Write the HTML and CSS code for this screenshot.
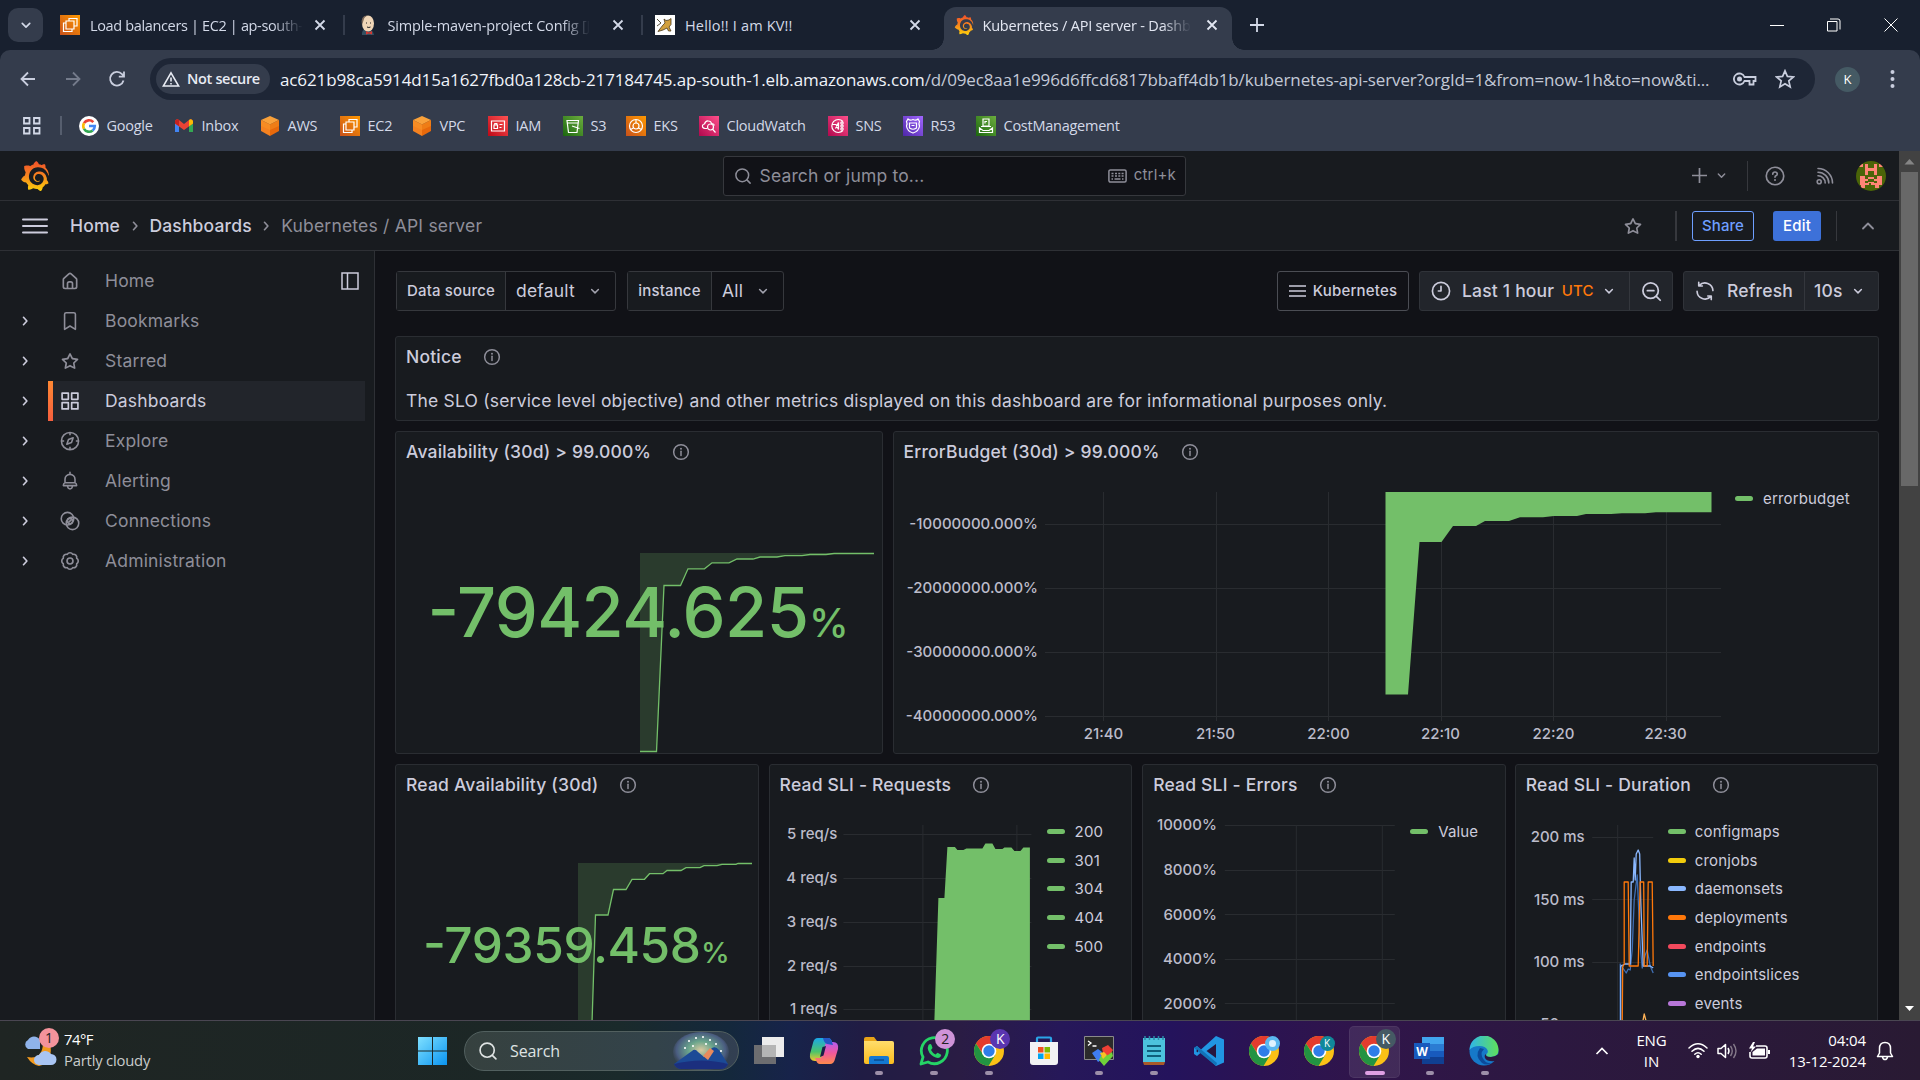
FILE: index.html
```html
<!DOCTYPE html>
<html lang="en">
<head>
<meta charset="utf-8">
<title>Kubernetes / API server - Dashboards - Grafana</title>
<link rel="stylesheet" href="styles.css">
</head>
<body>
<svg class="defs" width="0" height="0">
  <defs>
    <linearGradient id="gGraf" x1="0" y1="0" x2="0" y2="1"><stop offset="0" stop-color="#f0502a"/><stop offset=".45" stop-color="#f57f20"/><stop offset="1" stop-color="#fdd20a"/></linearGradient>
    <linearGradient id="gOrange" x1="0" y1="1" x2="1" y2="0"><stop offset="0" stop-color="#c8511b"/><stop offset="1" stop-color="#ff9900"/></linearGradient>
    <linearGradient id="gRed" x1="0" y1="1" x2="1" y2="0"><stop offset="0" stop-color="#bd0816"/><stop offset="1" stop-color="#ff5252"/></linearGradient>
    <linearGradient id="gGreen" x1="0" y1="1" x2="1" y2="0"><stop offset="0" stop-color="#1b660f"/><stop offset="1" stop-color="#6cae3e"/></linearGradient>
    <linearGradient id="gPink" x1="0" y1="1" x2="1" y2="0"><stop offset="0" stop-color="#b0084d"/><stop offset="1" stop-color="#ff4f8b"/></linearGradient>
    <linearGradient id="gPurple" x1="0" y1="1" x2="1" y2="0"><stop offset="0" stop-color="#4d27a8"/><stop offset="1" stop-color="#a166ff"/></linearGradient>
    <linearGradient id="gWin" x1="0" y1="0" x2="1" y2="1"><stop offset="0" stop-color="#7fe0ff"/><stop offset="1" stop-color="#0a94f0"/></linearGradient>
    <linearGradient id="gEdge" x1="0" y1="0" x2="1" y2="0"><stop offset="0" stop-color="#2fb6ea"/><stop offset="1" stop-color="#5fe05a"/></linearGradient>
    <linearGradient id="gCop1" x1="0" y1="0" x2="0" y2="1"><stop offset="0" stop-color="#1aa7e8"/><stop offset=".6" stop-color="#4cc46a"/><stop offset="1" stop-color="#f5c72c"/></linearGradient>
    <linearGradient id="gCop2" x1="0" y1="0" x2="0" y2="1"><stop offset="0" stop-color="#b35cf0"/><stop offset=".5" stop-color="#f0589c"/><stop offset="1" stop-color="#ff8a4c"/></linearGradient>
    <linearGradient id="gFold" x1="0" y1="0" x2="0" y2="1"><stop offset="0" stop-color="#ffdd6b"/><stop offset="1" stop-color="#fbbc1e"/></linearGradient>
    <radialGradient id="gSky" cx=".5" cy=".45" r=".55"><stop offset="0" stop-color="#d9c9a0"/><stop offset=".4" stop-color="#6aa58c"/><stop offset=".8" stop-color="#4a5c80"/><stop offset="1" stop-color="#3f4a5e" stop-opacity="0"/></radialGradient>
    <symbol id="grafana" viewBox="0 0 24 24"><path fill="url(#gGraf)" d="M23.02 10.59a8.578 8.578 0 0 0-.862-3.034 8.911 8.911 0 0 0-1.789-2.445c.337-1.342-.413-2.505-.413-2.505-1.292-.08-2.113.4-2.416.62-.052-.02-.102-.044-.154-.064-.22-.089-.446-.172-.677-.247-.231-.073-.47-.14-.711-.197a9.867 9.867 0 0 0-.875-.161C14.557.753 12.94 0 12.94 0c-1.804 1.145-2.147 2.744-2.147 2.744l-.018.093c-.098.029-.2.057-.298.088-.138.042-.275.094-.413.143-.138.055-.275.107-.41.166a8.869 8.869 0 0 0-1.557.87l-.063-.029c-2.497-.955-4.716.195-4.716.195-.203 2.658.996 4.33 1.235 4.636a11.608 11.608 0 0 0-.607 2.635C1.636 12.677.953 15.014.953 15.014c1.926 2.214 4.171 2.351 4.171 2.351.003-.002.006-.002.006-.005.285.509.615.994.986 1.446.156.19.32.371.488.548-.704 2.009.099 3.68.099 3.68 2.144.08 3.553-.937 3.849-1.173a9.784 9.784 0 0 0 3.164.501h.08l.055-.003.107-.002.103-.005.003.002c1.01 1.44 2.788 1.646 2.788 1.646 1.264-1.332 1.337-2.653 1.337-2.94v-.058c0-.02-.003-.039-.003-.06.265-.187.52-.387.758-.6a7.875 7.875 0 0 0 1.415-1.7c1.43.083 2.437-.885 2.437-.885-.236-1.49-1.085-2.216-1.264-2.354l-.018-.013-.016-.013a.217.217 0 0 1-.031-.02c.008-.092.016-.18.02-.27.011-.162.016-.323.016-.48v-.253l-.005-.098-.008-.135a1.891 1.891 0 0 0-.01-.13c-.003-.042-.008-.083-.013-.125l-.016-.124-.018-.122a6.215 6.215 0 0 0-2.032-3.73 6.015 6.015 0 0 0-3.222-1.46 6.292 6.292 0 0 0-.85-.048l-.107.002h-.063l-.044.003-.104.008a4.777 4.777 0 0 0-3.335 1.695c-.332.4-.592.84-.768 1.297a4.594 4.594 0 0 0-.312 1.817l.003.091c.005.055.007.11.013.164a3.615 3.615 0 0 0 .698 1.82 3.53 3.53 0 0 0 1.827 1.282c.33.098.66.14.971.137.039 0 .078 0 .114-.002l.063-.003c.02 0 .041-.003.062-.003.034-.002.065-.007.099-.01.007 0 .018-.003.028-.003l.031-.005.06-.008a1.18 1.18 0 0 0 .112-.02c.036-.008.072-.013.109-.024a2.634 2.634 0 0 0 .914-.415c.028-.02.056-.041.085-.065a.248.248 0 0 0 .039-.35.244.244 0 0 0-.309-.06l-.078.042c-.09.044-.184.083-.283.116a2.476 2.476 0 0 1-.475.096c-.028.003-.054.006-.083.006l-.083.002c-.026 0-.054 0-.08-.002l-.102-.006h-.012l-.024.006c-.016-.003-.031-.003-.044-.006-.031-.002-.06-.007-.091-.01a2.59 2.59 0 0 1-.724-.213 2.557 2.557 0 0 1-.667-.438 2.52 2.52 0 0 1-.805-1.475 2.306 2.306 0 0 1-.029-.444l.006-.122v-.023l.002-.031c.003-.021.003-.04.005-.06a3.163 3.163 0 0 1 1.352-2.29 3.12 3.12 0 0 1 .937-.43 2.946 2.946 0 0 1 .776-.101h.06l.07.002.045.003h.026l.07.005a4.041 4.041 0 0 1 1.635.49 3.94 3.94 0 0 1 1.602 1.662 3.77 3.77 0 0 1 .397 1.414l.005.076.003.075c.002.026.002.05.002.075 0 .024.003.052 0 .07v.065l-.002.073-.008.174a6.195 6.195 0 0 1-.08.639 5.1 5.1 0 0 1-.267.927 5.31 5.31 0 0 1-.624 1.13 5.052 5.052 0 0 1-3.237 2.014 4.82 4.82 0 0 1-.649.066l-.039.003h-.287a6.607 6.607 0 0 1-1.716-.265 6.776 6.776 0 0 1-3.4-2.274 6.75 6.75 0 0 1-.746-1.15 6.616 6.616 0 0 1-.714-2.596l-.005-.083-.002-.02v-.056l-.003-.073v-.096l-.003-.104v-.07l.003-.163c.008-.22.026-.45.054-.678a8.707 8.707 0 0 1 .28-1.355c.128-.444.286-.872.473-1.277a7.04 7.04 0 0 1 1.456-2.1 5.925 5.925 0 0 1 .953-.763c.169-.111.343-.213.524-.306.089-.05.182-.091.273-.135.047-.02.093-.042.138-.062a7.177 7.177 0 0 1 .714-.267l.145-.045c.049-.015.098-.026.148-.041.098-.029.197-.052.296-.076.049-.013.1-.02.15-.033l.15-.032.151-.028.076-.013.075-.01.153-.024c.057-.01.114-.013.171-.023l.169-.021c.036-.003.073-.008.106-.01l.073-.008.036-.003.042-.002c.057-.003.114-.008.171-.01l.086-.006h.023l.037-.003.145-.007a7.999 7.999 0 0 1 1.708.125 7.917 7.917 0 0 1 2.048.68 8.253 8.253 0 0 1 1.672 1.09l.09.077.089.078c.06.052.114.107.171.159.057.052.112.106.166.16.052.055.107.107.159.164a8.671 8.671 0 0 1 1.41 1.978c.012.026.028.052.04.078l.04.078.075.156c.023.051.05.1.07.153l.065.15a8.848 8.848 0 0 1 .45 1.34.19.19 0 0 0 .201.142.186.186 0 0 0 .172-.184c.01-.246.002-.532-.024-.856z"/></symbol>
    <symbol id="x" viewBox="0 0 12 12"><path d="M1.500 1.500l9 9M10.500 1.500l-9 9" fill="none" stroke="currentColor" stroke-width="1.800"/></symbol>
    <symbol id="down" viewBox="0 0 24 24"><path d="M7.500 10l4.500 4.500L16.500 10" fill="none" stroke="currentColor" stroke-width="2" stroke-linecap="round" stroke-linejoin="round"/></symbol>
    <symbol id="right" viewBox="0 0 24 24"><path d="M10 7l4.500 5L10 17" fill="none" stroke="currentColor" stroke-width="2.200" stroke-linecap="round" stroke-linejoin="round"/></symbol>
    <symbol id="star" viewBox="0 0 24 24"><path fill="currentColor" d="M22,9.67A1,1,0,0,0,21.14,9l-5.69-.83L12.9,3a1,1,0,0,0-1.8,0L8.55,8.16,2.86,9a1,1,0,0,0-.81.68,1,1,0,0,0,.25,1l4.13,4-1,5.68A1,1,0,0,0,6.9,21.44L12,18.77l5.1,2.67a.93.93,0,0,0,.46.12,1,1,0,0,0,.59-.19,1,1,0,0,0,.4-1l-1-5.68,4.13-4A1,1,0,0,0,22,9.67Zm-6.15,4a1,1,0,0,0-.29.88l.72,4.2-3.76-2a1.06,1.06,0,0,0-.94,0l-3.76,2,.72-4.2a1,1,0,0,0-.29-.88l-3-3,4.21-.61a1,1,0,0,0,.76-.55L12,5.7l1.88,3.82a1,1,0,0,0,.76.55l4.21.61Z"/></symbol>
    <symbol id="info" viewBox="0 0 24 24"><g fill="none" stroke="currentColor" stroke-width="2"><circle cx="12" cy="12" r="9.800"/><path d="M12 11v5.500" stroke-linecap="round"/></g><circle cx="12" cy="7.700" r="1.300" fill="currentColor"/></symbol>
    <symbol id="glass" viewBox="0 0 24 24"><g fill="none" stroke="currentColor" stroke-width="2" stroke-linecap="round"><circle cx="11" cy="11" r="8.500"/><path d="M17.200 17.200L21.500 21.500"/></g></symbol>
    <symbol id="ec2" viewBox="0 0 20 20"><path fill="url(#gOrange)" d="M0 0h20v20H0z"/><g fill="none" stroke="#fff" stroke-width="1.200"><path d="M6 8H3.500v8.500H12V14"/><path d="M6 6h8v8H6z"/><path d="M9 6V3.500h8V11h-3"/></g></symbol>
    <symbol id="cube" viewBox="0 0 20 20"><path fill="#f9a13a" d="M10 0l9 4-9 4.500L1 4z"/><path fill="#f58220" d="M1 4l9 4.500V20l-9-5z"/><path fill="#e8690b" d="M19 4l-9 4.500V20l9-5z"/><path fill="#fb9a28" d="M1 4l9 4 9-4v6l-9 4-9-4z" opacity=".4"/></symbol>
    <symbol id="chrome" viewBox="0 0 30 30"><circle cx="15" cy="15" r="15" fill="#fbc116"/><path fill="#e33b2e" d="M15 8h13.300A15 15 0 0 0 2 7.500L9 18z"/><path fill="#229342" d="M2 7.500A15 15 0 0 0 14.500 30L21.500 18.500 15 22 9 18.500z"/><circle cx="15" cy="15" r="7.300" fill="#fff"/><circle cx="15" cy="15" r="5.700" fill="#2f7de9"/></symbol>
  </defs>
</svg>

<div class="screen">
  <header class="tabs">
    <div class="tab-menu"><svg width="20" height="20"><use href="#down"/></svg></div>
    <div class="tab tab-one">
      <svg width="20" height="20"><use href="#ec2"/></svg><span class="tab-title fade">Load balancers | EC2 | ap-south-</span><svg class="close" width="12" height="12"><use href="#x"/></svg>
    </div>
    <div class="tab tab-two">
      <svg width="20" height="20" viewBox="0 0 20 20"><path d="M4 18q1-5 7-4 4 1 5 6H4z" fill="#335061"/><ellipse cx="10" cy="8.500" rx="6" ry="8" fill="#f0d6b7"/><path d="M4 10Q2 0 10 .5q-4 1-4.500 5z" fill="#7c6858"/><path d="M8 8h1M12 8h1M9 12q2 1 3.500 0" stroke="#222" fill="none"/><path d="M8 16l3 1.500 3-1.500v3.500l-3-1-3 1z" fill="#d33833"/></svg><span class="tab-title fade">Simple-maven-project Config [J</span><svg class="close" width="12" height="12"><use href="#x"/></svg>
    </div>
    <div class="tab tab-three">
      <svg width="20" height="20" viewBox="0 0 20 20"><path fill="#fff" d="M0 0h20v20H0z"/><path d="M9 4l2 1.500 3-.5 2-1.500v6l-2 2.500 2 4h-2.500L12 13l-4 2-5 1.500 3-4 2-2.500 2-2z" fill="#d2a03c" stroke="#4a3a1c" stroke-width=".8"/><path d="M2 4l4 4-4 3" stroke="#55503c" fill="none"/></svg><span class="tab-title">Hello!! I am KV!!</span><svg class="close" width="12" height="12"><use href="#x"/></svg>
    </div>
    <div class="tab tab-active">
      <svg width="20" height="20"><use href="#grafana"/></svg><span class="tab-title fade">Kubernetes / API server - Dashb</span><svg class="close" width="12" height="12"><use href="#x"/></svg>
    </div>
    <svg class="new-tab" width="14" height="14"><path d="M7 0v14M0 7h14" stroke="currentColor" stroke-width="1.800"/></svg>
    <div class="window-buttons">
      <svg width="14" height="14"><path d="M0 7.500h14" stroke="#fff"/></svg>
      <svg width="14" height="14"><path d="M.5 3.500h9.500v9.500H.5zM3 1h8q2 0 2 2v8.500" fill="none" stroke="#fff"/></svg>
      <svg width="14" height="14"><path d="M.5 .5l13 13M13.500 .5l-13 13" stroke="#fff"/></svg>
    </div>
  </header>

  <div class="chrome-bars">
    <div class="toolbar">
      <svg class="nav" width="20" height="20"><path d="M17 10H3.500M10 3.500L3.500 10l6.500 6.500" fill="none" stroke="currentColor" stroke-width="1.800"/></svg>
      <svg class="nav dim" width="20" height="20"><path d="M3 10h13.500M10 3.500l6.500 6.500-6.500 6.500" fill="none" stroke="currentColor" stroke-width="1.800"/></svg>
      <svg class="nav" width="20" height="20"><path d="M16.500 11.500A6.800 6.800 0 1 1 15 5.200L17 7.500M17 2.500v5.200h-5.200" fill="none" stroke="currentColor" stroke-width="1.800"/></svg>
      <div class="omnibox">
        <div class="chip"><svg width="18" height="16"><path d="M9 1.800L16.700 15H1.300z" fill="none" stroke="currentColor" stroke-width="1.600"/><path d="M9 6.500v4M9 12v1.500" stroke="currentColor" stroke-width="1.600"/></svg>Not secure</div>
        <div class="url"><b>ac621b98ca5914d15a1627fbd0a128cb-217184745.ap-south-1.elb.amazonaws.com</b>/d/09ec8aa1e996d6ffcd6817bbaff4db1b/kubernetes-api-server?orgId=1&amp;from=now-1h&amp;to=now&amp;ti...</div>
        <svg width="24" height="14"><path d="M11.500 5H22.500v4h-2v3.500h-4V9h-5A5.500 5.500 0 1 1 11.500 5z" fill="none" stroke="currentColor" stroke-width="1.800"/><circle cx="6.500" cy="7" r="2.500" fill="currentColor"/></svg>
        <svg class="bm-star" width="20" height="20"><path d="M10 1.800l2.400 5.600 6 .5-4.600 4 1.400 6L10 14.700 4.800 17.900l1.400-6-4.600-4 6-.5z" fill="none" stroke="currentColor" stroke-width="1.700"/></svg>
      </div>
      <div class="profile">K</div>
      <svg class="dots" width="5" height="20"><g fill="currentColor"><circle cx="2.500" cy="3" r="2"/><circle cx="2.500" cy="10" r="2"/><circle cx="2.500" cy="17" r="2"/></g></svg>
    </div>
    <nav class="bookmarks">
      <svg width="20" height="20"><path d="M2 2h5.500v5.500H2zM12 2h5.500v5.500H12zM2 12h5.500v5.500H2zM12 12h5.500v5.500H12z" fill="none" stroke="currentColor" stroke-width="1.800"/></svg>
      <i></i>
      <a><svg width="20" height="20" viewBox="0 0 20 20"><circle cx="10" cy="10" r="10" fill="#fff"/><g fill="none" stroke-width="2.600"><path d="M14.300 6.200A5.800 5.800 0 0 0 5 7.200" stroke="#ea4335"/><path d="M5 7.200a5.800 5.800 0 0 0 0 5.600" stroke="#fbbc05"/><path d="M5 12.800a5.800 5.800 0 0 0 8.700 1.600" stroke="#34a853"/><path d="M13.700 14.400A5.800 5.800 0 0 0 15.800 10H10" stroke="#4285f4"/></g></svg>Google</a>
      <a><svg width="20" height="20" viewBox="0 0 20 20"><path d="M1 5v11h4V9z" fill="#4285f4"/><path d="M19 5v11h-4V9z" fill="#34a853"/><path d="M1 5v2.500l9 6.500 9-6.500V5q-1.500-3-4-1l-5 4-5-4Q2.500 2 1 5z" fill="#ea4335"/><path d="M15 4q2.500-2 4 1v2.500L15 10.300z" fill="#fbbc05"/><path d="M1 5q1.500-3 4-1v6.300L1 7.500z" fill="#c5221f"/></svg>Inbox</a>
      <a><svg width="20" height="20"><use href="#cube"/></svg>AWS</a>
      <a><svg width="20" height="20"><use href="#ec2"/></svg>EC2</a>
      <a><svg width="20" height="20"><use href="#cube"/></svg>VPC</a>
      <a><svg width="20" height="20" viewBox="0 0 20 20"><path fill="url(#gRed)" d="M0 0h20v20H0z"/><path fill="none" stroke="#fff" stroke-width="1.200" d="M3.500 5h13v10h-13zM6 9h3.500v3.500H6zM6.800 9V7.500h2V9M11.500 8.500h3M11.500 11.500h2"/></svg>IAM</a>
      <a><svg width="20" height="20" viewBox="0 0 20 20"><path fill="url(#gGreen)" d="M0 0h20v20H0z"/><path fill="none" stroke="#fff" stroke-width="1.200" d="M4 4.500h11.500l-1.500 12H5.500zM4.500 7h10.500M9 10l7.500 2.500"/></svg>S3</a>
      <a><svg width="20" height="20" viewBox="0 0 20 20"><path fill="url(#gOrange)" d="M0 0h20v20H0z"/><g fill="none" stroke="#fff" stroke-width="1.200"><circle cx="10" cy="10" r="6.500"/><circle cx="10" cy="10" r="3"/><path d="M10 3.500v3.500M4.500 13.500L7.500 12M15.500 13.500L12.500 12"/></g></svg>EKS</a>
      <a><svg width="20" height="20" viewBox="0 0 20 20"><path fill="url(#gPink)" d="M0 0h20v20H0z"/><g fill="none" stroke="#fff" stroke-width="1.200"><path d="M8 12.500H6Q3 12 3.500 9.500 4 8 5.500 8 6.500 4.500 9.500 5q2.500 0 3 2.500 2.500 0 2.800 2"/><circle cx="11.500" cy="11" r="3"/><path d="M13.500 13.200l3 3.300"/></g></svg>CloudWatch</a>
      <a><svg width="20" height="20" viewBox="0 0 20 20"><path fill="url(#gPink)" d="M0 0h20v20H0z"/><g fill="none" stroke="#fff" stroke-width="1.200"><path d="M15 5.500A6.500 6.500 0 1 0 15 14.500M4 8.500h4l2.500 5V6.500l-3 6"/><circle cx="14" cy="7" r="1.200"/><circle cx="14" cy="10" r="1.200"/><circle cx="14" cy="13" r="1.200"/></g></svg>SNS</a>
      <a><svg width="20" height="20" viewBox="0 0 20 20"><path fill="url(#gPurple)" d="M0 0h20v20H0z"/><g fill="none" stroke="#fff" stroke-width="1.200"><path d="M10 3.500q3 1.500 5-.5l1.500 2.500q-1 2 0 4.500-.5 5-6.500 7-6-2-6.500-7 1-2.500 0-4.500L5 3q2 2 5 .5z"/><path d="M6.500 7h7v5q-3.500 2.500-7 0zM8.500 9.500h3"/></g></svg>R53</a>
      <a><svg width="20" height="20" viewBox="0 0 20 20"><path fill="url(#gGreen)" d="M0 0h20v20H0z"/><path fill="none" stroke="#fff" stroke-width="1.200" d="M7 3h6v7H7zM9 7.500V5.500h2M5 10.500h10M3.500 12v4.500h13V12l-3.500 2.500H7z"/></svg>CostManagement</a>
    </nav>
  </div>

  <div class="page">
    <div class="app">
      <div class="topbar">
        <svg class="logo" width="30" height="30"><use href="#grafana"/></svg>
        <div class="search"><svg width="18" height="18"><use href="#glass"/></svg><span>Search or jump to...</span><svg width="19" height="14" viewBox="0 0 19 14"><rect x=".9" y=".9" width="17.200" height="12.200" rx="1.500" fill="none" stroke="currentColor" stroke-width="1.500"/><path d="M3.500 4.500h2M7 4.500h2M10.300 4.500h2M13.600 4.500h2M3.500 7h2M7 7h2M10.300 7h2M13.600 7h2M3.500 10h1.500M6.500 10h6M14 10h1.500" stroke="currentColor" stroke-width="1.300"/></svg><small>ctrl+k</small></div>
        <div class="top-actions">
          <svg width="15" height="15"><path d="M7.500 0v15M0 7.500h15" stroke="currentColor" stroke-width="1.700"/></svg>
          <svg class="ta-down" width="17" height="17"><use href="#down"/></svg>
          <i></i>
          <svg class="ta-help" width="20" height="20" viewBox="0 0 24 24"><circle cx="12" cy="12" r="10.500" fill="none" stroke="currentColor" stroke-width="2"/><path d="M9.300 9.700Q9.500 7.200 12 7.200t2.700 2.300q0 1.600-1.600 2.300-1.100.5-1.100 1.700" fill="none" stroke="currentColor" stroke-width="2" stroke-linecap="round"/><circle cx="12" cy="16.700" r="1.200" fill="currentColor"/></svg>
          <svg class="ta-rss" width="20" height="20" viewBox="0 0 20 20"><g fill="none" stroke="currentColor" stroke-width="1.600" stroke-linecap="round"><circle cx="4.200" cy="15.800" r="2"/><path d="M3 9.800A7 7 0 0 1 10.200 17M3 6.200A10.800 10.800 0 0 1 13.800 17M3 2.500A14.500 14.500 0 0 1 17.500 17"/></g></svg>
          <svg class="avatar" width="30" height="30" viewBox="0 0 30 30"><rect width="30" height="30" fill="#4a6408"/><path fill="#ff8577" d="M2 3h5v3H2zM9 3h3v4h6V3h3v11h-3v-4h-6v4H9zM23 3h5v3h-5zM4 15h5v3h3v3h6v-3h3v-3h5v9h-3v3h-4v-3h-4v-2h-2v2H9v3H5v-3H4zM12 16h6v2h-6z"/><path fill="#4a6408" d="M9 20h3v2H9zM18 20h3v2h-3z"/></svg>
        </div>
      </div>
      <div class="crumbbar">
        <svg class="burger" width="26" height="16"><path d="M1 1.500h24M1 8h24M1 14.500h24" stroke="#ccccdc" stroke-width="2" stroke-linecap="round"/></svg>
        <div class="crumbs"><b>Home</b><svg width="18" height="18"><use href="#right"/></svg><b>Dashboards</b><svg width="18" height="18"><use href="#right"/></svg><span>Kubernetes / API server</span></div>
        <div class="crumb-actions">
          <svg class="fav" width="20" height="20"><use href="#star"/></svg>
          <i class="thick"></i>
          <div class="btn share">Share</div>
          <div class="btn edit">Edit</div>
          <i></i>
          <svg class="fold" width="24" height="24"><path d="M7 14.500l5-5 5 5" fill="none" stroke="currentColor" stroke-width="1.800" stroke-linecap="round" stroke-linejoin="round"/></svg>
        </div>
      </div>
      <div class="body">
        <aside class="side">
          <div class="item"><em></em><svg class="ic" viewBox="0 0 24 24"><path fill="currentColor" d="M20,8h0L14,2.740a3,3,0,0,0-4,0L4,8a3,3,0,0,0-1,2.260V19a3,3,0,0,0,3,3H18a3,3,0,0,0,3-3V10.250A3,3,0,0,0,20,8ZM14,20H10V15a1,1,0,0,1,1-1h2a1,1,0,0,1,1,1Zm5-1a1,1,0,0,1-1,1H16V15a3,3,0,0,0-3-3H11a3,3,0,0,0-3,3v5H6a1,1,0,0,1-1-1V10.250a1,1,0,0,1,.340-.750l6-5.250a1,1,0,0,1,1.320,0l6,5.250a1,1,0,0,1,.340.750Z"/></svg><span>Home</span><svg class="dock" width="18" height="18"><path d="M1 1h16v16H1zM6.500 1v16" fill="none" stroke="#ccccdc" stroke-width="1.500"/></svg></div>
          <div class="item"><em><svg width="18" height="18"><use href="#right"/></svg></em><svg class="ic" viewBox="0 0 24 24"><path d="M5.500 22V4q0-2 2-2h9q2 0 2 2v18L12 18z" fill="none" stroke="currentColor" stroke-width="1.900" stroke-linejoin="round"/></svg><span>Bookmarks</span></div>
          <div class="item"><em><svg width="18" height="18"><use href="#right"/></svg></em><svg class="ic"><use href="#star"/></svg><span>Starred</span></div>
          <div class="item on"><em><svg width="18" height="18"><use href="#right"/></svg></em><svg class="ic" viewBox="0 0 24 24"><path d="M2.500 2.500h7.500v7.500H2.500zM14 2.500h7.500v7.500H14zM2.500 14h7.500v7.500H2.500zM14 14h7.500v7.500H14z" fill="none" stroke="currentColor" stroke-width="2" stroke-linejoin="round"/></svg><span>Dashboards</span></div>
          <div class="item"><em><svg width="18" height="18"><use href="#right"/></svg></em><svg class="ic" viewBox="0 0 24 24"><g fill="none" stroke="currentColor" stroke-width="1.900" stroke-linejoin="round"><circle cx="12" cy="12" r="10.300"/><path d="M15.800 8.200L13.800 13.800 8.200 15.800 10.200 10.200zM12 2v3M12 19v3M2 12h3M19 12h3M12 12v.1"/></g></svg><span>Explore</span></div>
          <div class="item"><em><svg width="18" height="18"><use href="#right"/></svg></em><svg class="ic" viewBox="0 0 24 24"><path d="M12 1.500V4M6 14V10a6 6 0 0 1 12 0v4q2 1 2 3.500H4Q4 15 6 14zM6 14h12M9 18q.5 3.500 3 3.500t3-3.500" fill="none" stroke="currentColor" stroke-width="1.900" stroke-linejoin="round" stroke-linecap="round"/></svg><span>Alerting</span></div>
          <div class="item"><em><svg width="18" height="18"><use href="#right"/></svg></em><svg class="ic" viewBox="0 0 24 24"><g fill="none" stroke="currentColor" stroke-width="1.900"><circle cx="9" cy="9.200" r="7.500"/><circle cx="15" cy="14.800" r="7.500"/><circle cx="12" cy="12" r="3.200"/><path d="M10 14l4-4"/></g></svg><span>Connections</span></div>
          <div class="item"><em><svg width="18" height="18"><use href="#right"/></svg></em><svg class="ic" viewBox="-11.500 -11.500 23 23"><g fill="none" stroke="currentColor" stroke-width="1.900" stroke-linejoin="round"><circle r="3.400"/><path d="M7.670-3.180A3.700 3.700 0 0 1 7.670 3.180A3.700 3.700 0 0 1 3.180 7.670A3.700 3.700 0 0 1-3.180 7.670A3.700 3.700 0 0 1-7.670 3.180A3.700 3.700 0 0 1-7.670-3.180A3.700 3.700 0 0 1-3.180-7.670A3.700 3.700 0 0 1 3.180-7.670A3.700 3.700 0 0 1 7.670-3.180z"/></g></svg><span>Administration</span></div>
        </aside>
        <main class="main">
          <div class="controls">
            <div class="var v1"><label>Data source</label><div>default<svg width="18" height="18"><use href="#down"/></svg></div></div>
            <div class="var v2"><label>instance</label><div>All<svg width="18" height="18"><use href="#down"/></svg></div></div>
            <div class="link"><svg width="17" height="14"><path d="M0 2h17M0 7h17M0 12h17" stroke="#ccccdc" stroke-width="1.600"/></svg>Kubernetes</div>
            <div class="group g1"><div><svg width="20" height="20" viewBox="0 0 24 24"><g fill="none" stroke="currentColor" stroke-width="2" stroke-linecap="round" stroke-linejoin="round"><circle cx="12" cy="12" r="10.300"/><path d="M12 6.500V12H8.800"/></g></svg><b>Last 1 hour</b><u>UTC</u><svg width="18" height="18"><use href="#down"/></svg></div><div><svg width="21" height="21" viewBox="0 0 24 24"><g fill="none" stroke="currentColor" stroke-width="2" stroke-linecap="round"><circle cx="11" cy="11" r="8.800"/><path d="M17.500 17.500L22 22M7.300 11h7.400"/></g></svg></div></div>
            <div class="group g2"><div><svg width="20" height="20" viewBox="0 0 24 24"><path d="M2.500 12.500A9.500 9.500 0 0 0 19 18.500M21.500 11.500A9.500 9.500 0 0 0 5 5.500M4.500 1.700V6h4.300M15.300 18h4.200v4.300" fill="none" stroke="currentColor" stroke-width="2" stroke-linecap="round" stroke-linejoin="round"/></svg><b>Refresh</b></div><div><b>10s</b><svg width="18" height="18"><use href="#down"/></svg></div></div>
          </div>

          <div class="grid">
            <section class="panel notice"><h2>Notice<svg width="18" height="18"><use href="#info"/></svg></h2><p>The SLO (service level objective) and other metrics displayed on this dashboard are for informational purposes only.</p></section>

            <section class="panel avail"><h2>Availability (30d) &gt; 99.000%<svg width="18" height="18"><use href="#info"/></svg></h2>
              <svg class="plot" width="486" height="281" viewBox="396 472 486 281">
                <path d="M640 553V751.500H656.500L664 585.500H680.500L688 568.800H704.500L712 562.800H729L737 559H753L760 557H777L785 555.700H802L810 554.500H826L834 553.500H874V553z" fill="#73bf69" fill-opacity=".2"/>
                <path d="M640 751.500H656.500L664 585.500H680.500L688 568.800H704.500L712 562.800H729L737 559H753L760 557H777L785 555.700H802L810 554.500H826L834 553.500H874" class="spark"/>
                <text class="stat" x="427.500" y="636.500" font-size="68.500" textLength="381.500">-79424.625</text><text class="stat" x="809" y="636.500" font-size="40" textLength="36">%</text>
              </svg>
            </section>

            <section class="panel error"><h2>ErrorBudget (30d) &gt; 99.000%<svg width="18" height="18"><use href="#info"/></svg></h2>
              <div class="row">
                <svg class="plot" width="830" height="281" viewBox="894 472 830 281">
                  <path class="gl" d="M1045 524.500H1721M1045 588.500H1721M1045 652.500H1721M1045 716.500H1721M1103.500 492V721M1216.500 492V721M1328.500 492V721M1441.500 492V721M1553.500 492V721M1666.500 492V721"/>
                  <path fill="#73bf69" d="M1385.500 492V694.500H1408L1419.500 542H1441.500L1453 526H1476L1485 521H1509L1520 517.300H1543L1554 516H1577L1586 514H1611L1622 513.200H1645L1656 512.300H1711.500V492z"/>
                  <g class="ax end"><text x="1038" y="529">-10000000.000%</text><text x="1038" y="593">-20000000.000%</text><text x="1038" y="657">-30000000.000%</text><text x="1038" y="721">-40000000.000%</text></g>
                  <g class="ax mid"><text x="1103.500" y="739">21:40</text><text x="1215.500" y="739">21:50</text><text x="1328.500" y="739">22:00</text><text x="1440.500" y="739">22:10</text><text x="1553.500" y="739">22:20</text><text x="1665.500" y="739">22:30</text></g>
                </svg>
                <ul class="legend l-err"><li><s class="green"></s>errorbudget</li></ul>
              </div>
            </section>

            <section class="panel q"><h2>Read Availability (30d)<svg width="18" height="18"><use href="#info"/></svg></h2>
              <svg class="plot" width="361" height="280" viewBox="396 805 361 280">
                <path d="M578 863V1085H590L595.500 915H608L613.500 889.500H626L632 879.300H644.500L649.500 873.700H663L667 870.500H681L686 867.700H700L704 865.700H717L722 864.300H736L738 863.500H752V863z" fill="#73bf69" fill-opacity=".2"/>
                <path d="M590 1085L595.500 915H608L613.500 889.500H626L632 879.300H644.500L649.500 873.700H663L667 870.500H681L686 867.700H700L704 865.700H717L722 864.300H736L738 863.500H752" class="spark"/>
                <text class="stat" x="423" y="962.500" font-size="49.500" textLength="278">-79359.458</text><text class="stat" x="701" y="962.500" font-size="29" textLength="26">%</text>
              </svg>
            </section>

            <section class="panel q"><h2>Read SLI - Requests<svg width="18" height="18"><use href="#info"/></svg></h2>
              <div class="row">
                <svg class="plot" width="265" height="280" viewBox="769.600 805 265 280">
                  <path class="gl" d="M843 834.500H1031M843 878.500H1031M843 922.500H1031M843 966.500H1031M843 1009.500H1031M922.500 825V1085M1016.500 825V1085"/>
                  <path fill="#73bf69" d="M933 1085L934 1020 938 898H944L947 847H954.500L957 850H963L966 848.500H982L985 843.500H992L995 849H1002L1004 847.500H1011L1014 851H1020L1023 847.500H1029.500V1085z"/>
                  <g class="ax end"><text x="837" y="839">5 req/s</text><text x="837" y="883">4 req/s</text><text x="837" y="927">3 req/s</text><text x="837" y="971">2 req/s</text><text x="837" y="1014">1 req/s</text></g>
                </svg>
                <ul class="legend l-req"><li><s class="green"></s>200</li><li><s class="green"></s>301</li><li><s class="green"></s>304</li><li><s class="green"></s>404</li><li><s class="green"></s>500</li></ul>
              </div>
            </section>

            <section class="panel q"><h2>Read SLI - Errors<svg width="18" height="18"><use href="#info"/></svg></h2>
              <div class="row">
                <svg class="plot" width="255" height="280" viewBox="1143.200 805 255 280">
                  <path class="gl" d="M1225 825.500H1395M1225 870.500H1395M1225 914.500H1395M1225 959.500H1395M1225 1003.500H1395M1296.500 825V1085M1382.500 825V1085"/>
                  <g class="ax end"><text x="1217" y="829.500">10000%</text><text x="1217" y="874.500">8000%</text><text x="1217" y="919.500">6000%</text><text x="1217" y="963.500">4000%</text><text x="1217" y="1008.500">2000%</text></g>
                </svg>
                <ul class="legend l-er2"><li><s class="green"></s>Value</li></ul>
              </div>
            </section>

            <section class="panel q q-last"><h2>Read SLI - Duration<svg width="18" height="18"><use href="#info"/></svg></h2>
              <div class="row">
                <svg class="plot" width="140" height="280" viewBox="1515.800 805 140 280">
                  <path class="gl" d="M1592 837.500H1653M1592 899.500H1653M1592 962.500H1653M1617.500 825V1085"/>
                  <g fill="none" stroke-width="1.300" stroke-linejoin="round">
                    <path stroke="#3f6fb5" d="M1620 1085V964L1624 970 1626 973 1628 969 1630 970 1632 950 1634 900 1637 875 1640 945 1642 968 1645 955 1647 950 1650 966 1653 973"/>
                    <path stroke="#8ab8ff" d="M1620.500 1085V966L1625 964H1630L1631 882H1633L1634 858 1635 880 1636 854 1638 850 1639.500 854 1640.500 900 1643 966H1650L1653 968"/>
                    <path stroke="#ff780a" d="M1621.500 1085L1622.500 967 1624 964V882H1628L1629 966H1638L1640 882H1643.500L1644 966H1647L1648 882H1652L1653 966"/>
                    <path stroke="#ffb357" d="M1642 1025L1644 1014 1647 1025"/>
                  </g>
                  <g class="ax end"><text x="1584.500" y="841.500">200 ms</text><text x="1584.500" y="904.500">150 ms</text><text x="1584.500" y="966.500">100 ms</text><text x="1584.500" y="1028.500">50 ms</text></g>
                </svg>
                <ul class="legend l-dur"><li><s class="green"></s>configmaps</li><li><s class="yellow"></s>cronjobs</li><li><s class="lblue"></s>daemonsets</li><li><s class="orange"></s>deployments</li><li><s class="red"></s>endpoints</li><li><s class="blue"></s>endpointslices</li><li><s class="violet"></s>events</li></ul>
              </div>
            </section>
          </div>
        </main>
      </div>
    </div>
    <div class="scroll"><svg width="21" height="21"><path d="M5.500 13.500L10.500 8l5 5.500z" fill="#858585"/></svg><div class="thumb"></div><svg width="21" height="24"><path d="M6 10l4.500 5L15 10z" fill="#fff"/></svg></div>
  </div>

  <footer class="taskbar">
    <div class="weather">
      <svg width="36" height="40" viewBox="0 0 36 40"><path d="M5 18a5 5 0 0 1 0-9 7 7 0 0 1 12 0v9z" fill="#8fb3ea"/><path d="M27 10q4 22-11 25-7-1-12-9 15 3 16-13z" fill="#f29a1f"/><path d="M16 34a5 5 0 0 1 0-10 7 7 0 0 1 12-1 5.500 5.500 0 0 1 0 11z" fill="#a9c5f3"/></svg>
      <span class="badge">1</span>
      <div><b>74°F</b><span>Partly cloudy</span></div>
    </div>
    <svg class="start" width="29" height="30" viewBox="0 0 29 30"><path fill="url(#gWin)" d="M0 1h14v13.500H0zM15 1h14v13.500H15zM0 15.500h14V29H0zM15 15.500h14V29H15z"/></svg>
    <div class="tsearch"><svg width="20" height="20"><use href="#glass"/></svg>Search<svg class="pic" width="58" height="38" viewBox="0 0 58 38"><ellipse cx="29" cy="20" rx="28" ry="20" fill="url(#gSky)"/><path d="M2 32L20 19q3-3 6 1l6 5 8-9q4-2 7 2l9 14q-2 5-8 5H10q-6 0-8-5z" fill="#1c4a96"/><path d="M31 24l7-8 4 3-6 9z" fill="#e88a5c"/><path d="M2 32q28-7 54 0-2 5-8 5H10q-6 0-8-5z" fill="#1b2f7e"/><path d="M17 8v2M24 5v2M31 4v2M38 7v2M44 11v2M13 15v2M21 13v2M34 11v2M49 18v2" stroke="#fff" stroke-width="1.600"/></svg></div>
    <div class="apps">
      <div><svg viewBox="0 0 30 30" width="30" height="30"><path d="M0 9h22v19H0z" fill="#6d6d70"/><path d="M8 1h22v20H8z" fill="#ececec"/><path d="M8 9h14v12H8z" fill="#b5b5b5"/></svg></div>
      <div><svg viewBox="0 0 30 30" width="30" height="30"><path d="M9 2h10q3 0 4 4l1 3h-6l-4 13q-1 3-4 3H6q-6 0-5-7L4 7q1-5 5-5z" fill="url(#gCop1)"/><path d="M21 28H11q-3 0-4-4l-1-2h6l4-13q1-3 4-3h4q6 0 5 7l-3 10q-1 5-5 5z" fill="url(#gCop2)"/><path d="M14 2h5q3 0 4 4l1 3-6-1q-3-1-4-6z" fill="#2457c5"/><path d="M13.500 11L17 10l-2.500 9.500L11 21z" fill="#1b1d48"/></svg></div>
      <div class="run"><svg viewBox="0 0 30 30" width="30" height="30"><path d="M0 3q0-2 2-2h8l3 4H0z" fill="#e8a317"/><path d="M0 5h28q2 0 2 2v19q0 2-2 2H2q-2 0-2-2z" fill="url(#gFold)"/><path d="M5 28v-6q0-2 2-2h16q2 0 2 2v6z" fill="#1478d2"/><path d="M10 24h10" stroke="#0b4f94" stroke-width="1.600"/></svg></div>
      <div class="run"><svg viewBox="0 0 30 30" width="30" height="30"><path d="M2 28L4 21A13 13 0 1 1 9 26z" fill="none" stroke="#25d366" stroke-width="2.800" stroke-linejoin="round"/><path d="M9.500 9q2-2 3 0l1 3-1.500 2q1.500 3 4.500 4.500l2-1.700 3 1.500q1.500.700 0 2.500-2.500 2.500-7-.300Q9 17 8.700 12z" fill="#25d366"/></svg><span class="badge mauve">2</span></div>
      <div class="run"><svg width="30" height="30"><use href="#chrome"/></svg><span class="badge indigo">K</span></div>
      <div><svg viewBox="0 0 30 30" width="30" height="30"><path d="M8 7V2.500q0-1 1-1h12q1 0 1 1V7" fill="none" stroke="#2aa5e8" stroke-width="2.200"/><path d="M1 6h28v20q0 3-3 3H4q-3 0-3-3z" fill="#f2f2f4"/><path d="M9 11h5.500v5.500H9z" fill="#f25022"/><path d="M15.500 11H21v5.500h-5.500z" fill="#7fba00"/><path d="M9 17.500h5.500V23H9z" fill="#00a4ef"/><path d="M15.500 17.500H21V23h-5.500z" fill="#ffb900"/></svg></div>
      <div class="run"><svg viewBox="0 0 30 30" width="30" height="30"><path d="M.5 .5h29v23H.5z" fill="#2b2b2b" stroke="#8a8a8a"/><path d="M4 5l3 2-3 2.500M8.500 10h4" stroke="#fff" fill="none" stroke-width="1.300"/><path d="M8 17l6-4 4 3-1 5 2 2-5 3z" fill="#3f7df0"/><path d="M18 12l6-3 5 5-4 6-6-3z" fill="#ef4035"/><path d="M17 20l7-1 4-3 1 4-9 10-5-6z" fill="#6fd13a"/><path d="M16 17l4-1 3 3-4 4z" fill="#f7c325"/></svg></div>
      <div class="run"><svg viewBox="0 0 30 30" width="30" height="30"><path d="M4 2h22v24H4z" fill="#4cc2dd"/><path d="M4 26h22l-1 3H5z" fill="#a85a2a"/><path d="M8 10h14M8 15h14M8 20h14" stroke="#0f5f7c" stroke-width="2"/><path d="M6 0v4M10.500 0v4M15 0v4M19.500 0v4M24 0v4" stroke="#2a8aa8" stroke-width="1.500"/></svg></div>
      <div><svg viewBox="0 0 30 30" width="30" height="30"><path d="M22 0l8 3.500v23L22 30 7 16.500 3 20 0 18V12l3-2 4 3.500z" fill="#2196e3"/><path d="M22 8v14l-9.500-7z" fill="#28163f"/><path d="M0 12l3-2 20 17-1 3z" fill="#1273b8"/><path d="M2 15l2-1.500v3z" fill="#28163f"/></svg></div>
      <div><svg width="30" height="30"><use href="#chrome"/></svg><span class="badge small sky"></span></div>
      <div><svg width="30" height="30"><use href="#chrome"/></svg><span class="badge small teal">K</span></div>
      <div class="run cur"><svg width="30" height="30"><use href="#chrome"/></svg><span class="badge slate">K</span></div>
      <div class="run"><svg viewBox="0 0 30 30" width="30" height="30"><path d="M8 1h22v7H8z" fill="#41a5ee"/><path d="M8 8h22v7H8z" fill="#2b7cd3"/><path d="M8 15h22v6H8z" fill="#185abd"/><path d="M8 21h22v7H8z" fill="#103f91"/><path d="M0 7h16v16H0z" fill="#185abd"/><text x="8" y="19.500" text-anchor="middle" font-size="12" font-weight="700" fill="#fff">W</text></svg></div>
      <div class="run"><svg viewBox="0 0 30 30" width="30" height="30"><circle cx="15" cy="15" r="14.500" fill="#1679c9"/><path d="M.5 14A14.500 14.500 0 0 1 29.500 14q0 7-8 7-5 0-4-3 2-1 1-4-2-4-8-4-7 0-10 4z" fill="url(#gEdge)"/><path d="M11 12q-6 8 2 15 5 3 10 0-5 1-8-3-5-6 0-11z" fill="#0c4b9b"/><path d="M17 18q-1 3 5 3 4 0 7.500-3l.5 3-3 4q-9 1-11-3-1-3 1-4z" fill="#2b1840"/></svg></div>
    </div>
    <div class="tray">
      <svg class="t-up" width="14" height="10"><path d="M1.500 8L7 2.500 12.500 8" fill="none" stroke="#fff" stroke-width="1.700"/></svg>
      <div class="lang">ENG<br>IN</div>
      <svg class="t-wifi" width="20" height="17"><path d="M1 6Q10-2.500 19 6M4 9.200Q10 3.500 16 9.200M6.800 12.200Q10 9.200 13.200 12.200" fill="none" stroke="#fff" stroke-width="1.500" stroke-linecap="round"/><circle cx="10" cy="14.500" r="1.700" fill="#fff"/></svg>
      <svg class="t-vol" width="21" height="16"><path d="M1 5.500h3L8.500 1.500v13L4 10.500H1zM11 5q2 3 0 6" fill="none" stroke="#fff" stroke-width="1.500" stroke-linejoin="round"/><path d="M13.500 3q3.500 5 0 10M16.500 1q5 7 0 14" fill="none" stroke="#857a8a" stroke-width="1.400"/></svg>
      <svg class="t-bat" width="22" height="18"><path d="M8 4h9q2 0 2 2v8q0 2-2 2H4q-2 0-2-2v-4" fill="none" stroke="#fff" stroke-width="1.600"/><path d="M4.500 10L9 6.500h8v7H4.500zM20 8h2v4h-2zM5 0L1 6.500h3L2.500 10.500 8 4.500H5L7 0z" fill="#fff"/></svg>
      <div class="clock">04:04<br>13-12-2024</div>
      <svg class="t-bell" width="18" height="20"><path d="M9 1.500q-5.500 0-5.500 6V12L1.500 15.500h15L14.500 12V7.500q0-6-5.500-6zM6.500 16q.5 2.500 2.500 2.500t2.500-2.500" fill="none" stroke="#fff" stroke-width="1.500" stroke-linejoin="round"/></svg>
    </div>
  </footer>
</div>
</body>
</html>
```
FILE: styles.css
```css
* { box-sizing: border-box; }
body { margin: 0; background: #111217; font-family: "Open Sans", "Noto Sans", sans-serif; }
svg { display: block; flex: none; }
.defs { position: absolute; }
ul, h2, p { margin: 0; padding: 0; list-style: none; }
b { font-weight: inherit; }
.screen { width: 1920px; height: 1080px; display: flex; flex-direction: column; overflow: hidden; background: #18202f; }

/* browser tab strip */
.tabs { height: 50px; display: flex; align-items: center; color: #d3d9e8; flex: none; }
.tab-menu { width: 35px; height: 34px; margin-left: 8px; border-radius: 10px; background: #343c4c; display: grid; place-items: center; }
.tab { width: 297.5px; height: 20px; padding: 0 17px 0 12.5px; display: flex; align-items: center; flex: none; font-size: 14.5px; letter-spacing: -.35px; border-left: 2px solid #343c4c; }
.tab-one { width: 299px; padding-left: 14px; margin-left: 1px; border-color: transparent; }
.tab-two { letter-spacing: -.16px; }
.tab-three { letter-spacing: .18px; }
.tab-title { margin-left: 10px; white-space: nowrap; }
.fade { -webkit-mask-image: linear-gradient(90deg, #000 86%, transparent); mask-image: linear-gradient(90deg, #000 86%, transparent); }
.close { margin-left: auto; }
.tab-active { width: 288px; height: 43px; padding: 0 14px 7px 9.5px; margin: 7px 0 0 6px; background: #343c4c; border: 0; border-radius: 12px 12px 0 0; color: #e3e7f2; position: relative; }
.tab-active .tab-title { margin-left: 9px; letter-spacing: -.2px; }
.tab-active::before, .tab-active::after { content: ""; position: absolute; bottom: 0; width: 12px; height: 12px; }
.tab-active::before { left: -12px; background: radial-gradient(circle at 0 0, transparent 11.5px, #343c4c 12px); }
.tab-active::after { right: -12px; background: radial-gradient(circle at 100% 0, transparent 11.5px, #343c4c 12px); }
.new-tab { margin-left: 18px; }
.window-buttons { margin-left: auto; padding-right: 22px; display: flex; gap: 43px; }

/* toolbar and bookmarks */
.chrome-bars { height: 101px; background: #343c4c; border-radius: 10px 10px 0 0; flex: none; }
.toolbar { height: 58px; display: flex; align-items: center; color: #c9cede; padding-left: 18px; }
.nav { margin-right: 24.5px; }
.nav.dim { color: #747b8b; }
.omnibox { width: 1665px; height: 42px; border-radius: 21px; background: #1e2636; margin-left: -1.5px; padding: 0 20px 0 6px; display: flex; align-items: center; }
.chip { width: 114px; height: 30px; border-radius: 15px; background: #343c4c; display: flex; align-items: center; gap: 7px; padding: 0 0 1px 6px; font-size: 14.5px; font-weight: 600; letter-spacing: -.33px; color: #e8ebf3; white-space: nowrap; }
.url { width: 1440px; margin: 0 auto 0 10px; font-size: 17px; letter-spacing: -.125px; white-space: nowrap; color: #c3c9d6; }
.url b { color: #f0f3fa; }
.bm-star { margin-left: 18px; }
.profile { width: 25px; height: 25px; border-radius: 50%; background: #455a64; color: #fff; font-size: 13px; display: grid; place-items: center; margin-left: 20px; }
.dots { margin-left: 30px; }
.bookmarks { height: 35px; display: grid; grid-template-columns: 39px 18px 95px 86px 80px 72px 76px 75px 63px 73px 129px 75px 73px 180px; padding-left: 22px; align-items: center; font-size: 14.5px; letter-spacing: -.25px; color: #d3d9e8; white-space: nowrap; }
.bookmarks i { width: 2px; height: 19px; background: #565e6e; margin-left: -1px; }
.bookmarks a { display: flex; align-items: center; gap: 7.5px; }

/* grafana shell */
.page { height: 869px; flex: none; display: flex; overflow: hidden; background: #181b1f; }
.app { width: 1899px; height: 869px; font-family: Inter, sans-serif; font-size: 17.5px; letter-spacing: .19px; color: #ccccdc; display: flex; flex-direction: column; }
.topbar { height: 50px; border-bottom: 1px solid #2e3035; display: flex; align-items: center; padding-left: 20px; color: #8e8e99; flex: none; }
.search { width: 463px; height: 40px; margin-left: 673px; border: 1px solid #36383d; border-radius: 3px; background: #111217; display: flex; align-items: center; padding: 0 9px 0 10px; }
.search span { margin: 0 auto 0 7.5px; letter-spacing: .16px; }
.search small { font-size: 15px; margin: 0 0 2px 6.5px; }
.top-actions { margin-left: auto; display: flex; align-items: center; padding-right: 13px; }
.top-actions i, .crumb-actions i { width: 1px; height: 30px; background: #36383d; }
.ta-down { margin: 0 17px 0 5.5px; }
.ta-help { margin: 0 30px 0 17px; }
.ta-rss { margin-right: 21.5px; }
.avatar { border-radius: 50%; }
.crumbbar { height: 50px; border-bottom: 1px solid #2e3035; display: flex; align-items: center; padding-left: 22px; flex: none; }
.crumbs { display: flex; align-items: center; margin-left: 22px; font-weight: 500; color: #8e8e99; letter-spacing: .16px; }
.crumbs b { color: #ccccdc; }
.crumbs svg { margin: 1px 5.7px 0; }
.crumbs span { font-weight: 400; letter-spacing: .2px; }
.crumb-actions { margin-left: auto; display: flex; align-items: center; color: #8e8e99; padding-right: 19px; }
.crumb-actions .thick { width: 2px; margin: 0 15px 0 32px; }
.btn { height: 30px; border-radius: 3px; font-size: 15px; font-weight: 500; display: grid; place-items: center; }
.share { width: 62px; border: 1px solid #6e9fff; color: #6e9fff; margin-right: 19px; letter-spacing: .1px; }
.edit { width: 48px; background: #3d71d9; color: #fff; margin-right: 15px; }
.fold { margin-left: 19px; }
.body { display: flex; flex: 1; min-height: 0; }
.side { width: 375px; border-right: 1px solid #2e3035; padding: 10px 9px 0 0; color: #8e8e99; flex: none; }
.item { height: 40px; display: flex; align-items: center; }
.item em { width: 32px; margin: 0 12px 0 16px; color: #ccccdc; }
.item .ic { width: 20px; height: 20px; }
.item span { margin: 0 0 2px 25px; letter-spacing: .18px; }
.item .dock { margin: 0 6px 0 auto; }
.on { color: #ccccdc; background: linear-gradient(#ff8833, #f55f3e) 47.5px 0 / 5px 40px no-repeat, linear-gradient(#22252b, #22252b) 50px 0 no-repeat; }

/* dashboard controls */
.main { background: #111217; flex: 1; padding: 20px 0 0 20px; overflow: hidden; }
.controls { display: flex; height: 40px; width: 1484px; padding-left: 1px; }
.var { display: flex; border: 1px solid #36383d; border-radius: 3px; margin-right: 11px; }
.var label { background: #181b1f; border-right: 1px solid #36383d; font-size: 15px; font-weight: 500; display: grid; place-items: center; padding-bottom: 1px; letter-spacing: .15px; }
.var div { flex: 1; display: flex; align-items: center; justify-content: space-between; padding: 0 11px 1.5px 10px; }
.v1 { width: 220px; }
.v1 label { width: 109px; }
.v2 { width: 157px; }
.v2 label { width: 84px; }
.var svg { color: #a2a2ae; margin-top: 2px; }
.link { width: 132px; margin-left: auto; border: 1px solid #4b4d54; border-radius: 3px; display: flex; align-items: center; justify-content: center; gap: 7px; font-size: 15px; font-weight: 500; padding-bottom: 1px; }
.link svg { margin-top: 1px; }
.group { margin-left: 10px; display: flex; background: #22252b; border: 1px solid #303339; border-radius: 3px; font-weight: 500; }
.group div { display: flex; align-items: center; }
.group div + div { border-left: 1px solid #34373d; }
.group b, .group u { margin-bottom: 1.5px; }
.g1 { width: 254px; }
.g1 div:first-child { width: 209px; padding-left: 11px; }
.g1 div + div { flex: 1; justify-content: center; }
.g2 { width: 196px; }
.g2 div:first-child { width: 120px; padding-left: 11px; }
.g2 div + div { flex: 1; padding-left: 9px; }
.group b { margin-left: 12px; }
.g1 b { margin-left: 11px; }
.g2 div + div b { margin-left: 0; margin-right: 6.5px; }
.group u { text-decoration: none; color: #ff780a; font-size: 15px; margin-left: 7.5px; margin-right: 6px; }

/* panels */
.grid { width: 1484px; margin-top: 25px; display: flex; flex-wrap: wrap; gap: 10px; }
.panel { background: #181b1f; border: 1px solid #2a2d32; border-radius: 3px; }
.panel h2 { height: 40px; padding: 0 0 2px 10px; display: flex; align-items: center; font-size: 17.5px; font-weight: 500; gap: 21px; white-space: nowrap; }
.panel h2 svg { color: #8e8e99; margin-top: 2px; }
.notice { width: 1484px; height: 85px; }
.notice p { padding: 10px; line-height: 28px; }
.avail { width: 488px; height: 323px; }
.error { width: 986px; height: 323px; }
.error h2 { padding-left: 9.5px; }
.q { width: 363.6px; height: 322px; }
.q-last { margin-left: -1px; }
.row { display: flex; }
.gl { stroke: #292c30; fill: none; }
.spark { fill: none; stroke: #73bf69; stroke-width: 1.3; }
.stat { fill: #73bf69; font-weight: 500; letter-spacing: 0; }
.ax text { font-size: 15px; fill: #bcbcca; letter-spacing: 0; font-weight: 500; }
.end { text-anchor: end; }
.mid { text-anchor: middle; }
.legend { font-size: 15px; padding-top: 12.5px; letter-spacing: .16px; }
.legend li { height: 28.6px; display: flex; align-items: center; gap: 10px; }
.legend s { width: 18px; height: 5px; border-radius: 3px; }
.l-err { padding-left: 11px; }
.l-req, .l-er2, .l-dur { padding-left: 12px; }
.l-dur li { gap: 9px; }
.green { background: #73bf69; }
.yellow { background: #f2cc0c; }
.lblue { background: #8ab8ff; }
.orange { background: #ff780a; }
.red { background: #f2495c; }
.blue { background: #5794f2; }
.violet { background: #b877d9; }

.scroll { width: 21px; background: #424242; display: flex; flex-direction: column; }
.scroll .thumb { width: 17px; height: 314px; background: #686868; margin: 0 2px auto; }

/* taskbar */
.taskbar { height: 60px; flex: none; display: flex; align-items: center; border-top: 1px solid #4a4652; color: #fff; background: linear-gradient(90deg, #1f2523 0, #1c2726 500px, #1a2a2b 620px, #14283c 730px, #17234a 790px, #201c44 860px, #2a1c44 960px, #261859 1060px, #24135c 1170px, #2b1352 1260px, #30154a 1370px, #2c1840 1550px, #291a33 1920px); }
.weather { width: 418px; padding-left: 23px; display: flex; align-items: center; position: relative; }
.weather b, .weather div span { display: block; font-size: 14.8px; line-height: 20.5px; letter-spacing: -.2px; }
.weather b { letter-spacing: -.5px; }
.weather div { margin: -2px 0 0 5px; }
.weather div span { color: #c9cccb; }
.badge { position: absolute; width: 20px; height: 20px; border-radius: 50%; background: #f4939b; color: #222; font-size: 14px; line-height: 20px; text-align: center; }
.weather .badge { left: 39px; top: -3px; }
.tsearch { width: 275px; height: 40px; margin: 0 2px 0 17px; border: 1px solid #52605f; border-radius: 20px; background: linear-gradient(90deg, #36413f, #33434a 70%, #323f52); display: flex; align-items: center; padding-left: 13px; font-size: 16px; letter-spacing: -.1px; gap: 12px; color: #dfe3e3; }
.pic { margin: 0 8px 0 auto; }
.apps { display: flex; }
.apps > div { width: 55.07px; height: 50px; display: grid; place-items: center; position: relative; }
.run::after { content: ""; position: absolute; left: 24px; bottom: 1px; width: 8px; height: 4px; border-radius: 2px; background: #9d8fa9; }
.cur::before { content: ""; position: absolute; left: 2px; top: 0; width: 49px; height: 50px; border-radius: 5px; background: rgba(255,255,255,.09); border: 1px solid rgba(255,255,255,.06); }
.cur svg { position: relative; }
.cur::after { left: 18px; width: 20px; background: #e0a0e4; }
.apps .badge { left: 29px; top: 3px; color: #fff; }
.apps .mauve { background: #cf93d8; color: #222; }
.apps .indigo { background: #5a35b0; }
.apps .slate { background: #455a64; }
.apps .small { width: 15px; height: 15px; left: 28px; top: 10px; line-height: 15px; font-size: 10px; }
.apps .sky { background: #dff2ff; border: 4px solid #5bb8f0; }
.apps .teal { background: #10889a; }
.tray { margin-left: auto; display: flex; align-items: center; font-size: 15px; line-height: 20.5px; letter-spacing: -.1px; padding-right: 26px; }
.lang { width: 40px; text-align: center; margin: 0 16px 0 23px; }
.t-vol { margin: 0 10px 0 9.5px; }
.clock { width: 88px; text-align: right; margin: 0 10px 0 8px; white-space: nowrap; }
```
